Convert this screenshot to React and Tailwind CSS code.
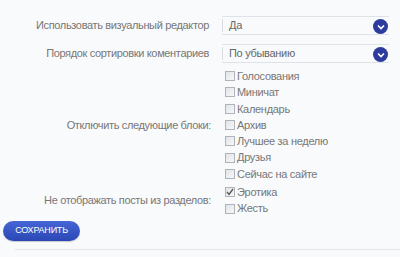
import React from 'react';

const BLOCKS = ['Голосования', 'Миничат', 'Календарь', 'Архив', 'Лучшее за неделю', 'Друзья', 'Сейчас на сайте'];
const SECTIONS = [
  { label: 'Эротика', checked: true },
  { label: 'Жесть', checked: false },
];

const font = { fontFamily: '"Liberation Sans", Arial, sans-serif' };

function Select({ value }) {
  return (
    <div className="flex items-center h-[19px] w-[167px] border-t border-b border-[#dfe2e8] relative">
      <div className="w-px h-[13px] bg-[#d8dbe0]" />
      <span className="pl-[6px] text-[11px] tracking-[-0.3px] text-[#666]">{value}</span>
      <span className="absolute right-[1px] top-[2px] w-[15px] h-[15px] rounded-full bg-[#2c3b9d] flex items-center justify-center">
        <svg width="8" height="6" viewBox="0 0 8 6">
          <path d="M1 1.5 L4 4.5 L7 1.5" fill="none" stroke="#fff" strokeWidth="1.6" />
        </svg>
      </span>
    </div>
  );
}

function Check({ label, checked }) {
  return (
    <div className="flex items-center h-[16.3px]">
      <span className="ml-[3px] w-[10px] h-[10px] border border-[#b0b3b9] bg-gradient-to-br from-[#e3e4e7] to-[#f7f8fa] flex items-center justify-center">
        {checked && (
          <svg width="8" height="8" viewBox="0 0 8 8">
            <path d="M1 4 L3 6.5 L7 1" fill="none" stroke="#555" strokeWidth="1.3" />
          </svg>
        )}
      </span>
      <span className="ml-[2px] text-[11px] tracking-[-0.3px] text-[#777]">{label}</span>
    </div>
  );
}

export default function App() {
  return (
    <div className="w-[400px] h-[257px] bg-[#f9fafc] overflow-hidden" style={font}>
      <div className="pt-[16px] flex flex-col">
        <div className="flex items-center">
          <div className="w-[209px] text-right text-[11px] tracking-[-0.35px] text-[#777]">Использовать визуальный редактор</div>
          <div className="ml-[13px]"><Select value="Да" /></div>
        </div>
        <div className="flex items-center mt-[9px]">
          <div className="w-[209px] text-right text-[11px] tracking-[-0.35px] text-[#777]">Порядок сортировки коментариев</div>
          <div className="ml-[13px]"><Select value="По убыванию" /></div>
        </div>
        <div className="flex items-center mt-[5px]">
          <div className="w-[211px] text-right text-[11px] tracking-[-0.35px] text-[#777]">Отключить следующие блоки:</div>
          <div className="ml-[11px] flex flex-col">
            {BLOCKS.map(b => <Check key={b} label={b} />)}
          </div>
        </div>
        <div className="flex items-center mt-[2px]">
          <div className="w-[211px] text-right text-[11px] tracking-[-0.35px] text-[#777]">Не отображать посты из разделов:</div>
          <div className="ml-[11px] flex flex-col">
            {SECTIONS.map(s => <Check key={s.label} label={s.label} checked={s.checked} />)}
          </div>
        </div>
        <div className="mt-[4px] pl-[3px] flex">
          <button className="w-[77px] h-[20px] rounded-full bg-gradient-to-b from-[#4566d6] to-[#2a47b4] text-white text-[9px] tracking-tight shadow-[0_1px_1px_rgba(0,0,0,0.2)]">
            СОХРАНИТЬ
          </button>
        </div>
        <div className="mt-[8px] ml-[15px] h-px bg-[#e3e5ea]" />
      </div>
    </div>
  );
}
